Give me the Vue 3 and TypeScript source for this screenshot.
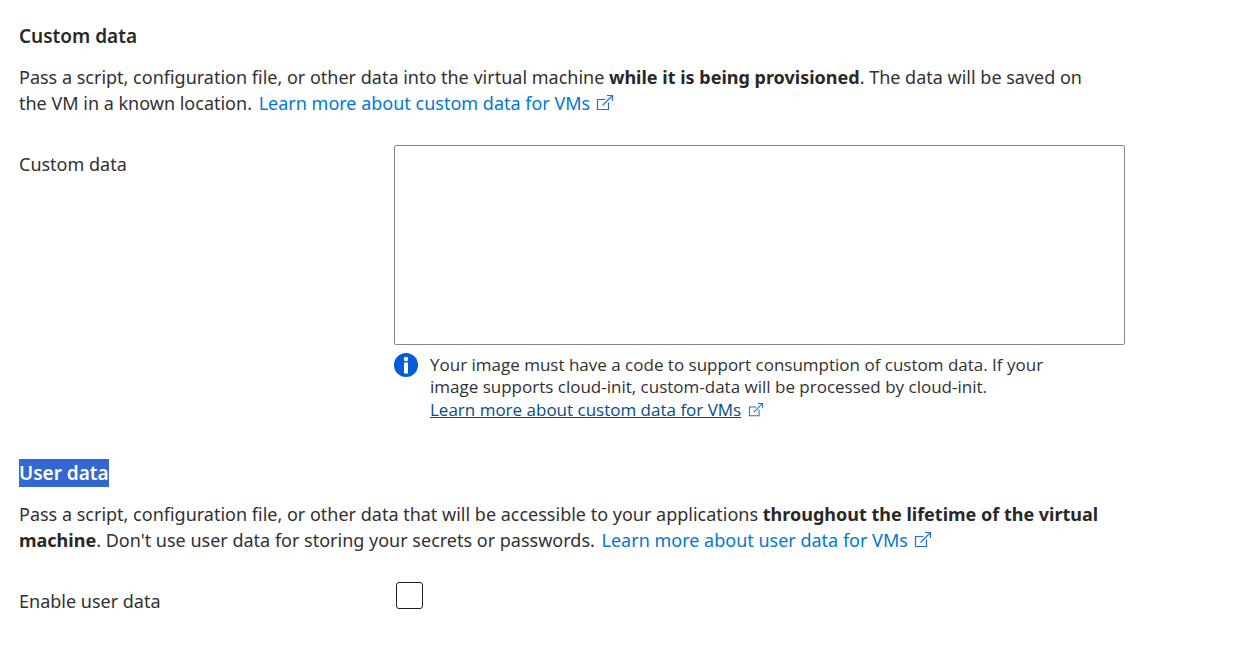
<script setup lang="ts">
import { ref } from 'vue'

const customData = ref('')
const enableUserData = ref(false)
</script>

<template>
  <main class="page">
    <section class="section">
      <h2 class="heading">Custom data</h2>
      <p class="intro">
        Pass a script, configuration file, or other data into the virtual machine
        <strong>while it is being provisioned</strong>. The data will be saved on the VM in a known location.
        <a class="link" href="#custom-data">Learn more about custom data for VMs<svg class="ext" viewBox="0 0 16 16" aria-hidden="true"><path d="M8.500 4.500H.5v10h11V7.500M10 .5h5.500V6M15.500.5l-10 10" /></svg></a>
      </p>
      <div class="field">
        <label class="label" for="custom-data">Custom data</label>
        <div class="control">
          <textarea id="custom-data" v-model="customData" class="box"></textarea>
          <div class="info">
            <svg class="badge" viewBox="0 0 24 24" aria-hidden="true">
              <circle cx="12" cy="12" r="12" fill="#015cda" />
              <circle cx="12" cy="6" r="2.200" fill="#fff" />
              <rect x="10" y="9.500" width="4" height="11" fill="#fff" />
            </svg>
            <p class="note">
              Your image must have a code to support consumption of custom data. If your image supports cloud-init, custom-data will be processed by cloud-init.
              <a class="note-link" href="#custom-data"><span>Learn more about custom data for VMs</span><svg class="ext small" viewBox="0 0 16 16" aria-hidden="true"><path d="M8.500 4.500H.5v10h11V7.500M10 .5h5.500V6M15.500.5l-10 10" /></svg></a>
            </p>
          </div>
        </div>
      </div>
    </section>

    <section class="section user">
      <h2 class="heading"><span class="selected">User data</span></h2>
      <p class="intro">
        Pass a script, configuration file, or other data that will be accessible to your applications
        <strong>throughout the lifetime of the virtual machine</strong>. Don't use user data for storing your secrets or passwords.
        <a class="link" href="#user-data">Learn more about user data for VMs<svg class="ext" viewBox="0 0 16 16" aria-hidden="true"><path d="M8.500 4.500H.5v10h11V7.500M10 .5h5.500V6M15.500.5l-10 10" /></svg></a>
      </p>
      <div class="field">
        <label class="label" for="enable-user-data">Enable user data</label>
        <input id="enable-user-data" v-model="enableUserData" class="check" type="checkbox" />
      </div>
    </section>
  </main>
</template>

<style scoped>
.page {
  padding: 22px 115px 20px 19px;
  font-family: "Noto Sans", "Open Sans", sans-serif;
  font-size: 18px;
  line-height: 26px;
  color: #323130;
}
.heading {
  margin: 0;
  font-size: 19px;
  line-height: 28px;
  font-weight: 600;
  color: #292827;
}
.selected {
  display: inline-block;
  background: #3367d1;
  color: #fff;
}
.intro {
  max-width: 1088px;
  margin: 14px 0 0;
}
strong {
  font-weight: 700;
  color: #292827;
}
.link {
  margin-left: 2px;
  color: #0078d4;
  text-decoration: none;
  white-space: nowrap;
}
.ext {
  width: 16px;
  height: 16px;
  margin-left: 7px;
  vertical-align: -1px;
  overflow: visible;
  fill: none;
  stroke: #1f6fe0;
  stroke-width: 1.200;
}
.small {
  width: 14px;
  height: 14px;
  margin-left: 8px;
}
.field {
  display: grid;
  grid-template-columns: 375px minmax(0, 731px);
  margin-top: 29px;
}
.label {
  padding-top: 6px;
}
.box {
  display: block;
  box-sizing: border-box;
  width: 100%;
  height: 200px;
  border: 1px solid #8a8886;
  border-radius: 2px;
  background: #fff;
  resize: none;
  outline: none;
}
.info {
  display: flex;
  gap: 12px;
  margin-top: 8px;
}
.badge {
  width: 24px;
  height: 24px;
  flex: none;
}
.note {
  margin: 0;
  padding-top: 1px;
  max-width: 640px;
  font-family: "Open Sans", "Noto Sans", sans-serif;
  font-size: 17px;
  line-height: 22px;
}
.note-link {
  display: block;
  margin-top: 1px;
  color: #004e8c;
  text-decoration: none;
}
.note-link span {
  text-decoration: underline;
}
.user {
  margin-top: 38px;
}
.check {
  appearance: none;
  box-sizing: border-box;
  width: 27px;
  height: 27px;
  margin: 0 0 0 2px;
  border: 1px solid #201f1e;
  border-radius: 3px;
  background: #fff;
}
</style>
